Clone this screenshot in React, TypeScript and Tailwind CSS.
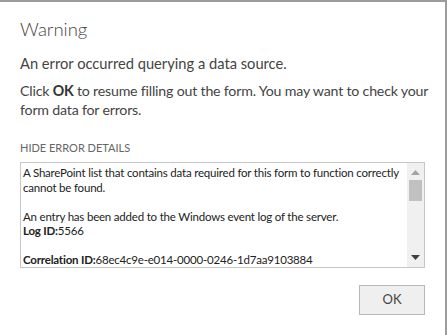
const font = { fontFamily: 'Lato, "Open Sans", sans-serif' };

function ScrollArrow({ down }: { down?: boolean }) {
  return (
    <svg width="9" height="5" viewBox="0 0 9 5" className={down ? 'text-[#404040]' : 'text-[#a3a3a3]'}>
      {down ? <path d="M0 0h9L4.5 5z" fill="currentColor" /> : <path d="M0 5h9L4.5 0z" fill="currentColor" />}
    </svg>
  );
}

function ErrorDetails() {
  return (
    <div className="flex h-[106px] border border-[#c6c6c6] bg-white">
      <div className="flex-1 overflow-hidden pl-[2px] pt-[3px] text-[11.5px] leading-[14.6px] tracking-[-0.2px] text-[#222]">
        <p>A SharePoint list that contains data required for this form to function correctly cannot be found.</p>
        <p className="h-[14.6px]" />
        <p>An entry has been added to the Windows event log of the server.</p>
        <p>
          <b>Log ID:</b>5566
        </p>
        <p className="h-[14px]" />
        <p>
          <b>Correlation ID:</b>68ec4c9e-e014-0000-0246-1d7aa9103884
        </p>
      </div>
      <div className="flex w-[17px] flex-col items-center bg-[#f0f0f0]">
        <div className="flex h-[17px] items-center justify-center pt-[2px]">
          <ScrollArrow />
        </div>
        <div className="h-[21px] w-[13px] bg-[#c1c1c1]" />
        <div className="flex-1" />
        <div className="flex h-[17px] items-center justify-center pb-[2px]">
          <ScrollArrow down />
        </div>
      </div>
    </div>
  );
}

export default function App() {
  return (
    <div className="h-[335px] w-[447px] bg-white" style={font}>
      <div className="h-full border-t-2 border-r-2 border-[#9c9c9c] pl-[20px] pr-[20px]">
        <h1 className="pt-[14px] text-[18.5px] leading-[26px] font-light text-[#444]">Warning</h1>
        <div className="mt-[12px] text-[#444]">
          <p className="text-[14.7px] leading-[19px]">An error occurred querying a data source.</p>
          <p className="mt-[8px] w-[412px] text-[14.2px] leading-[19px] tracking-[-0.2px]">
            Click <b className="text-[#333]">OK</b> to resume filling out the form. You may want to check your form data for errors.
          </p>
        </div>
        <div className="mt-[21px] text-[11px] leading-[16px] text-[#666]">HIDE ERROR DETAILS</div>
        <div className="mt-[6px]">
          <ErrorDetails />
        </div>
        <div className="mt-[17px] flex justify-end">
          <button className="h-[30px] w-[66px] border border-[#b8b8b8] bg-[#efefef] text-[13px] text-[#444]">OK</button>
        </div>
      </div>
    </div>
  );
}
